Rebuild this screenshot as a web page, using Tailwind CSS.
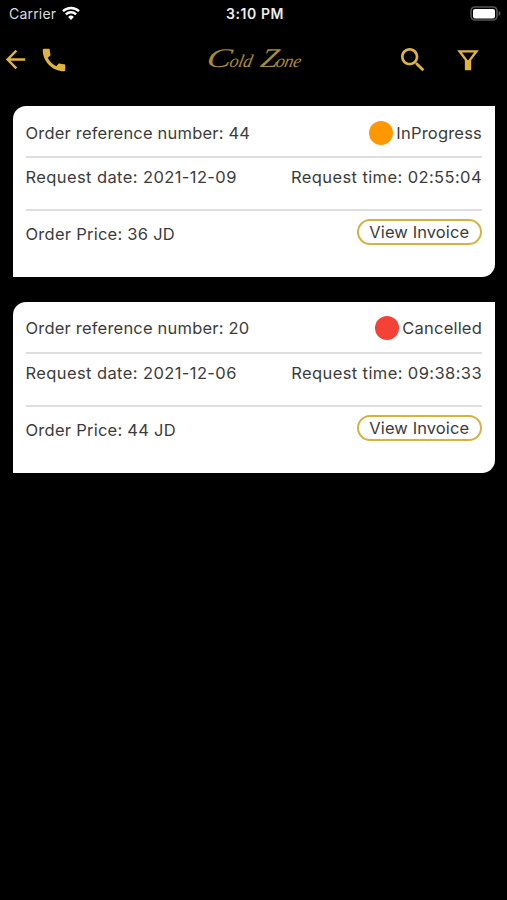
<!DOCTYPE html>
<html lang="en">
<head>
    <meta charset="UTF-8">
    <meta name="viewport" content="width=device-width, initial-scale=1.0">
    <title>Cold Zone - Orders</title>
    <script src="https://cdn.jsdelivr.net/npm/@tailwindcss/browser@4"></script>
</head>
<body class="bg-black min-h-screen overflow-hidden font-['Inter',sans-serif] text-[#3c3c3c]">

    <!-- Status bar -->
    <div class="grid grid-cols-3 items-center h-[27px] pl-[9px] pr-[6px] text-white">
        <div class="flex items-center gap-[6px]">
            <span class="text-[14px] leading-none tracking-[0.2px] text-[#dcdcdc]">Carrier</span>
            <svg class="w-[18px] h-[14px] -mt-[2px]" viewBox="0 0 18 14" fill="none" stroke="currentColor" stroke-width="2.5">
                <path d="M1 5.2a11.6 11.6 0 0 1 16 0"/>
                <path d="M3.900 8.400a7.400 7.400 0 0 1 10.200 0"/>
                <path d="M9 14L6.100 11a4.200 4.200 0 0 1 5.800 0z" fill="currentColor" stroke="none"/>
            </svg>
        </div>
        <span class="text-center text-[14px] leading-none font-semibold tracking-[0.600px] text-[#ececec]">3:10 PM</span>
        <svg class="justify-self-end w-[31px] h-[15px] -mt-px" viewBox="0 0 31 15">
            <rect x="1" y="1" width="26" height="13" rx="4" fill="none" stroke="#55555a" stroke-width="1.6"/>
            <rect x="3" y="3" width="22" height="9.500" rx="2" fill="#fff"/>
            <path d="M28.6 5v5c1.2-.5 1.9-1.4 1.9-2.5s-.7-2-1.900-2.500z" fill="#55555a"/>
        </svg>
    </div>

    <!-- App bar -->
    <header class="grid grid-cols-3 items-center h-[65px] text-[#e0b341]">
        <div class="flex items-center gap-[9px] pl-[1px]">
            <svg class="w-[29px] h-[29px]" viewBox="0 0 24 24" fill="currentColor"><path d="M20 11H7.830l5.590-5.590L12 4l-8 8 8 8 1.410-1.410L7.830 13H20v-2z"/></svg>
            <svg class="w-[30px] h-[30px]" viewBox="0 0 24 24" fill="currentColor"><path d="M20.010 15.380c-1.230 0-2.420-.2-3.530-.56-.35-.12-.74-.03-1.010.24l-1.570 1.970c-2.830-1.350-5.480-3.900-6.890-6.830l1.950-1.660c.27-.28.35-.67.24-1.020-.37-1.110-.56-2.300-.56-3.530 0-.54-.45-.99-.99-.99H4.190C3.650 3 3 3.240 3 3.990 3 13.280 10.730 21 20.010 21c.71 0 .99-.63.99-1.180v-3.450c0-.54-.45-.99-.99-.99z"/></svg>
        </div>
        <h1 class="flex items-baseline justify-center gap-[8px] pl-[2px] pb-[2px] -skew-x-12 font-['Liberation_Serif',serif] italic leading-none text-[18px] tracking-[-0.3px] text-[#a98a35] whitespace-nowrap">
            <span class="flex items-baseline"><span class="inline-block w-[23px] origin-left scale-x-[1.35] text-[27px]">C</span>old</span>
            <span class="flex items-baseline"><span class="inline-block w-[16px] origin-left scale-x-[1.15] text-[27px]">Z</span>one</span>
        </h1>
        <div class="flex items-center justify-end gap-[27px] pr-[28px]">
            <svg class="w-[32px] h-[32px] mr-[1px]" viewBox="0 0 24 24" fill="currentColor"><path d="M15.500 14h-.79l-.28-.27C15.410 12.590 16 11.110 16 9.500 16 5.910 13.090 3 9.500 3S3 5.910 3 9.500 5.910 16 9.500 16c1.610 0 3.090-.59 4.230-1.570l.27.28v.79l5 4.990L20.490 19l-4.990-5zm-6 0C7.010 14 5 11.990 5 9.500S7.010 5 9.500 5 14 7.010 14 9.500 11.990 14 9.500 14z"/></svg>
            <svg class="w-[22px] h-[22px]" viewBox="0 0 22 22" fill="none" stroke="currentColor" stroke-width="2.3">
                <path d="M2.500 2.300h17l-6.500 8.500v9.300H9v-9.300z"/>
                <path d="M11 11v9" stroke-width="3"/>
            </svg>
        </div>
    </header>

    <!-- Orders -->
    <main class="flex flex-col gap-[24.500px] pt-[14px] pl-[13px] pr-[12.500px] text-[16.500px] leading-5 tracking-[0.2px]">
        <section class="h-[171px] px-[12.500px] bg-white rounded-tl-[13px] rounded-br-[13px]">
            <div class="flex items-center justify-between h-[52px] pt-[3px] border-b-2 border-[#dedede]">
                <span>Order reference number: 44</span>
                <span class="flex items-center gap-[3px]"><i class="size-[24px] rounded-full bg-[#ff9800]"></i>InProgress</span>
            </div>
            <div class="flex items-start justify-between h-[53px] pt-[9px] border-b-2 border-[#dedede] tracking-[0.4px]">
                <span>Request date: 2021-12-09</span>
                <span>Request time: 02:55:04</span>
            </div>
            <div class="flex items-start justify-between pt-[8px]">
                <span class="pt-[5px] tracking-[0.25px]">Order Price: 36 JD</span>
                <button class="flex items-center justify-center w-[125.500px] h-[26px] rounded-full border-2 border-[#d9b044] tracking-[0.1px]">View Invoice</button>
            </div>
        </section>

        <section class="h-[171px] px-[12.500px] bg-white rounded-tl-[13px] rounded-br-[13px]">
            <div class="flex items-center justify-between h-[52px] pt-[2px] border-b-2 border-[#dedede]">
                <span>Order reference number: 20</span>
                <span class="flex items-center gap-[3px]"><i class="size-[24px] rounded-full bg-[#f44336]"></i>Cancelled</span>
            </div>
            <div class="flex items-start justify-between h-[53px] pt-[9px] border-b-2 border-[#dedede] tracking-[0.4px]">
                <span>Request date: 2021-12-06</span>
                <span>Request time: 09:38:33</span>
            </div>
            <div class="flex items-start justify-between pt-[8px]">
                <span class="pt-[5px] tracking-[0.25px]">Order Price: 44 JD</span>
                <button class="flex items-center justify-center w-[125.500px] h-[26px] rounded-full border-2 border-[#d9b044] tracking-[0.1px]">View Invoice</button>
            </div>
        </section>
    </main>

</body>
</html>
